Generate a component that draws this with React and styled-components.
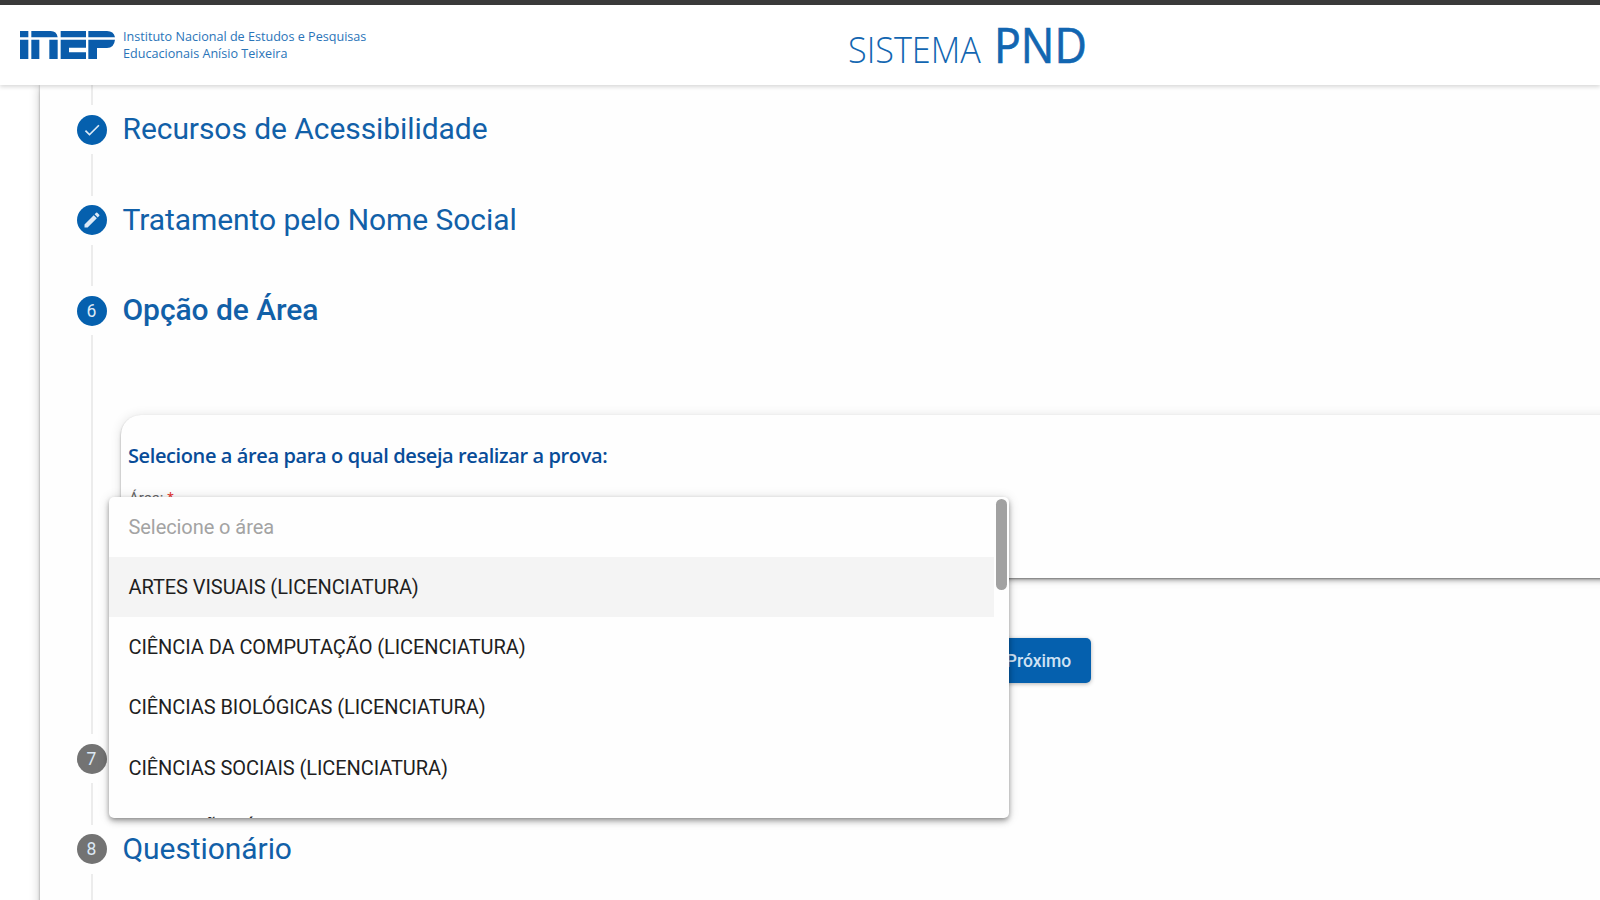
import React, { useState } from 'react';
import styled, { createGlobalStyle } from 'styled-components';
import { MdCheck, MdEdit } from 'react-icons/md';

const GlobalStyle = createGlobalStyle`
  * { box-sizing: border-box; }
  body {
    margin: 0;
    overflow: hidden;
    background: #fff;
    font-family: Roboto, sans-serif;
  }
`;

const Page = styled.div`
  height: 900px;
  display: flex;
  flex-direction: column;
  overflow: hidden;
`;

const TopStrip = styled.div`
  height: 5px;
  flex: none;
  background: #3a3a3a;
`;

const Header = styled.header`
  height: 80px;
  flex: none;
  display: flex;
  align-items: flex-start;
  padding-left: 20px;
  background: #fff;
  box-shadow: 0 2px 4px rgba(0, 0, 0, 0.15);
  z-index: 2;
`;

const Logo = styled.svg`
  width: 95px;
  height: 28px;
  margin-top: 26px;
  fill: #0a5cab;
`;

const Institute = styled.div`
  width: 260px;
  margin: 23px 0 0 8px;
  font: 400 12.6px/17.3px 'Open Sans', sans-serif;
  color: #2a74b8;
  white-space: nowrap;
`;

const SystemName = styled.h1`
  display: flex;
  align-items: baseline;
  margin: 9px 0 0 465px;
  color: #1266b1;
  font-family: 'Open Sans', sans-serif;
  line-height: 60px;
`;

const Light = styled.span`
  width: 146px;
  font-size: 36px;
  font-weight: 300;
  transform: scaleX(0.95);
  transform-origin: left;
`;

const Strong = styled.span`
  font-size: 49px;
  font-weight: 500;
  -webkit-text-stroke: 0.7px #1266b1;
  transform: scaleX(0.91);
  transform-origin: left;
`;

const Main = styled.main`
  flex: 1;
  min-height: 0;
  padding-left: 40px;
  margin-top: -0.5px;
`;

const Panel = styled.section`
  height: 900px;
  padding-left: 36.5px;
  background: #fefefe;
  box-shadow: 0 4px 5px -2px rgba(0, 0, 0, 0.2), 0 0 10px rgba(0, 0, 0, 0.22), 0 0 2px rgba(0, 0, 0, 0.3);
`;

const StepHeader = styled.div`
  height: 90.5px;
  display: flex;
  align-items: center;
  gap: 16px;
`;

const Track = styled.div`
  width: 30px;
  height: 100%;
  flex: none;
  display: flex;
  flex-direction: column;
  align-items: center;
  gap: 9.5px;
`;

const Line = styled.div`
  flex: 1;
  width: 2px;
  margin-left: 1px;
  background: #ececec;
`;

const Circle = styled.div`
  width: 30px;
  height: 30px;
  flex: none;
  display: flex;
  align-items: center;
  justify-content: center;
  border-radius: 50%;
  background: ${props => props.$pending ? '#737373' : '#0560ae'};
  color: #dce9f6;
  font-size: 17.5px;
`;

const StepTitle = styled.h2`
  margin: 0;
  padding-bottom: 2px;
  font-size: 30px;
  font-weight: ${props => props.$active ? 500 : 400};
  letter-spacing: -0.07px;
  color: #1160a8;
  white-space: nowrap;
`;

const StepBody = styled.div`
  height: 357.5px;
  display: flex;
`;

const BodyContent = styled.div`
  flex: 1;
  min-width: 0;
  margin-left: 14.5px;
  padding-top: 59.2px;
`;

const AreaCard = styled.div`
  position: relative;
  width: 1600px;
  height: 162.5px;
  padding: 25.5px 0 0 7px;
  border-radius: 20px;
  background: #fefefe;
  box-shadow: 0 4px 5px -2px rgba(0, 0, 0, 0.35), 0 1px 12px rgba(0, 0, 0, 0.12), 0 1px 2px rgba(0, 0, 0, 0.28);
`;

const Question = styled.p`
  margin: 0;
  font: 600 20px/30px 'Open Sans', sans-serif;
  letter-spacing: -0.39px;
  color: #084c98;
  white-space: nowrap;
`;

const Label = styled.label`
  display: block;
  margin: 15px 0 0 1px;
  font-size: 15px;
  line-height: 24px;
  color: #666;
`;

const Required = styled.span`
  color: #e53935;
`;

const Menu = styled.div`
  position: absolute;
  top: 81.6px;
  left: -12.5px;
  width: 900px;
  height: 321.2px;
  display: flex;
  border-radius: 5px;
  background: #fefefe;
  box-shadow: 0 2px 5px -1px rgba(0, 0, 0, 0.35), 0 4px 6px rgba(0, 0, 0, 0.16), 0 1px 12px rgba(0, 0, 0, 0.14);
  z-index: 1;
`;

const Options = styled.ul`
  width: 885.5px;
  height: 321.2px;
  margin: 0;
  padding: 0;
  overflow: hidden;
  list-style: none;
`;

const Option = styled.li`
  height: 60.2px;
  padding-left: 20px;
  font-size: 20px;
  line-height: 60.2px;
  letter-spacing: -0.07px;
  color: ${props => props.$placeholder ? '#a3a3a3' : '#1f1f1f'};
  background: ${props => props.$highlighted ? '#f4f4f4' : 'transparent'};
  white-space: nowrap;
`;

const Thumb = styled.div`
  width: 11.5px;
  height: 91px;
  margin: 2px 0 0 1.5px;
  border-radius: 6px;
  background: #a1a1a1;
`;

const Actions = styled.div`
  display: flex;
  padding: 60.3px 0 0 871px;
`;

const NextButton = styled.button`
  width: 99px;
  height: 45.5px;
  padding: 0 6px 0 0;
  border: 0;
  border-radius: 5px;
  background: #0560ae;
  color: #cfe2f4;
  font: 500 17.5px Roboto, sans-serif;
  box-shadow: 0 1px 4px rgba(0, 0, 0, 0.3);
`;

const areas = [
  'ARTES VISUAIS (LICENCIATURA)',
  'CIÊNCIA DA COMPUTAÇÃO (LICENCIATURA)',
  'CIÊNCIAS BIOLÓGICAS (LICENCIATURA)',
  'CIÊNCIAS SOCIAIS (LICENCIATURA)',
  'EDUCAÇÃO FÍSICA (LICENCIATURA)',
];

const InepLogo = () => (
  <Logo viewBox="0 0 285 84" preserveAspectRatio="none">
    <path d="M0 0h25v19H0zM0 26h25v58H0z" />
    <path d="M34 0h58q18 0 21 19H34zM34 26h24v58H34zM88 26h25v58H88z" />
    <path d="M122 0h76v19h-76zM122 26h76v24h-51v14h51v20h-76z" />
    <path d="M205 0h56q20 0 24 19h-80zM205 26h80q-3 25-24 25h-30v33h-26z" />
  </Logo>
);

const Step = ({ icon, title, active, pending }) => (
  <StepHeader>
    <Track>
      <Line />
      <Circle $pending={pending}>{icon}</Circle>
      <Line />
    </Track>
    <StepTitle $active={active}>{title}</StepTitle>
  </StepHeader>
);

const AreaSelect = () => {
  const [highlighted, setHighlighted] = useState(areas[0]);

  return (
    <Menu>
      <Options>
        <Option $placeholder>Selecione o área</Option>
        {areas.map(area => (
          <Option
            key={area}
            $highlighted={area === highlighted}
            onMouseEnter={() => setHighlighted(area)}
          >
            {area}
          </Option>
        ))}
      </Options>
      <Thumb />
    </Menu>
  );
};

const App = () => (
  <Page>
    <GlobalStyle />
    <TopStrip />
    <Header>
      <InepLogo />
      <Institute>
        Instituto Nacional de Estudos e Pesquisas<br />
        Educacionais Anísio Teixeira
      </Institute>
      <SystemName>
        <Light>SISTEMA</Light>
        <Strong>PND</Strong>
      </SystemName>
    </Header>
    <Main>
      <Panel>
        <Step icon={<MdCheck size={20} />} title="Recursos de Acessibilidade" />
        <Step icon={<MdEdit size={20} />} title="Tratamento pelo Nome Social" />
        <Step icon="6" title="Opção de Área" active />
        <StepBody>
          <Track><Line /></Track>
          <BodyContent>
            <AreaCard>
              <Question>Selecione a área para o qual deseja realizar a prova:</Question>
              <Label>Área: <Required>*</Required></Label>
              <AreaSelect />
            </AreaCard>
            <Actions>
              <NextButton>Próximo</NextButton>
            </Actions>
          </BodyContent>
        </StepBody>
        <Step icon="7" title="" pending />
        <Step icon="8" title="Questionário" pending />
        <Track><Line /></Track>
      </Panel>
    </Main>
  </Page>
);

export default App;
